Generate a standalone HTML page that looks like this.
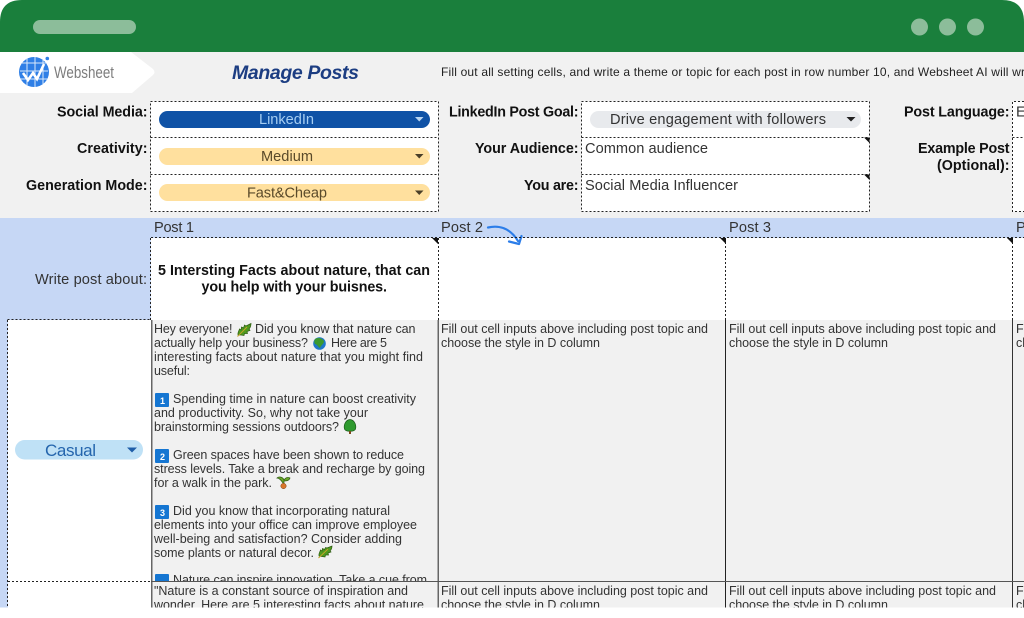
<!DOCTYPE html>
<html><head><meta charset="utf-8"><title>Manage Posts</title>
<style>
html,body{margin:0;padding:0;width:1024px;height:618px;overflow:hidden;background:#fff}
svg{display:block;position:absolute;left:0;top:0}
text{font-family:"Liberation Sans",sans-serif;white-space:pre}
.c{font-size:12.500px;fill:#333}
.l{font-size:14.300px;font-weight:bold;fill:#111;text-anchor:start}
.n{font-size:14.600px;fill:#333}
.d{fill:none;stroke:#222;stroke-width:1;stroke-dasharray:2 2;shape-rendering:crispEdges}
</style></head><body>
<svg width="1024" height="618" viewBox="0 0 1024 618" xmlns="http://www.w3.org/2000/svg">
<defs><clipPath id="page"><rect x="0" y="0" width="1024" height="607.5"/></clipPath>
<clipPath id="r1"><rect x="151" y="320" width="873" height="261"/></clipPath></defs>
<g clip-path="url(#page)">
<!-- backgrounds -->
<rect x="0" y="40" width="1024" height="180" fill="#f1f1f1"/>
<rect x="0" y="218" width="1024" height="400" fill="#c6d7f5"/>
<rect x="8" y="320" width="143" height="300" fill="#fff"/>
<rect x="151" y="238" width="873" height="82" fill="#fff"/>
<rect x="151" y="320" width="873" height="300" fill="#f1f1f1"/>
<!-- header -->
<path d="M0 52V22Q0 0 22 0H1002Q1024 0 1024 22V52Z" fill="#1a7f3c"/>
<rect x="33" y="20" width="103" height="14" rx="7" fill="#8cbd9a"/>
<circle cx="919.5" cy="27" r="8.5" fill="#8cbd9a"/>
<circle cx="947.5" cy="27" r="8.5" fill="#8cbd9a"/>
<circle cx="975.5" cy="27" r="8.5" fill="#8cbd9a"/>
<!-- logo -->
<path d="M0 52H131L153 69Q156 72.500 153 75L132 93H0Z" fill="#fff"/>
<circle cx="34" cy="72" r="15" fill="#2f7fe6"/>
<path d="M22 63H46M20 71H48M20 79H48M27 58V86M35 57V87M43 60V84" stroke="#d8e8fb" stroke-width="1" fill="none"/>
<path d="M23 73L28 80L33 73L37 79L44 64" stroke="#fff" stroke-width="2.600" fill="none"/>
<circle cx="47.300" cy="58.500" r="1.800" fill="#2f7fe6"/>
<text x="54" y="78" font-size="17" fill="#7d7d7d" textLength="60" lengthAdjust="spacingAndGlyphs">Websheet</text>
<!-- title -->
<text x="232" y="79" font-size="19.500" font-weight="bold" font-style="italic" fill="#1c3d82" textLength="127">Manage Posts</text>
<text x="441" y="76" font-size="12" fill="#222" textLength="584">Fill out all setting cells, and write a theme or topic for each post in row number 10, and Websheet AI will wr</text>
<!-- settings labels -->
<text class="l" x="57" y="116.500" textLength="90.500">Social Media:</text>
<text class="l" x="77" y="153" textLength="70.500">Creativity:</text>
<text class="l" x="26" y="190" textLength="121.500">Generation Mode:</text>
<text class="l" x="449" y="116.500" textLength="129.500">LinkedIn Post Goal:</text>
<text class="l" x="475" y="153" textLength="103.500">Your Audience:</text>
<text class="l" x="524" y="190" textLength="54.500">You are:</text>
<text class="l" x="904" y="116.500" textLength="105.500">Post Language:</text>
<text class="l" x="918" y="153" textLength="91.500">Example Post</text>
<text class="l" x="937" y="170" textLength="72.500">(Optional):</text>
<!-- settings cells -->
<rect x="151" y="101.500" width="287" height="110" fill="#fff"/>
<rect x="581.500" y="101.500" width="287.500" height="110" fill="#fff"/>
<rect x="1012.500" y="101.500" width="20" height="110" fill="#fff"/>
<path class="d" d="M150.500 101.500H438.500V211.500H150.500ZM150.500 137.500H438.500M150.500 174.500H438.500"/>
<path class="d" d="M581.500 101.500H869.500V211.500H581.500ZM581.500 137.500H869.500M581.500 174.500H869.500"/>
<path class="d" d="M1024 101.500H1012.500V211.500H1024M1012.500 137.500H1024"/>
<rect x="159" y="111" width="271" height="17" rx="8.500" fill="#0f52a6"/>
<rect x="159" y="148" width="271" height="17" rx="8.500" fill="#ffe09e"/>
<rect x="159" y="184" width="271" height="17" rx="8.500" fill="#ffe09e"/>
<rect x="590" y="111" width="271" height="17" rx="8.500" fill="#e8eaed"/>
<text x="259" y="124" font-size="14.600" fill="#a5cdf2" textLength="55">LinkedIn</text>
<text x="261" y="161" font-size="14.600" fill="#5a4a2a" textLength="52">Medium</text>
<text x="247" y="197.500" font-size="14.600" fill="#5a4a2a" textLength="80">Fast&amp;Cheap</text>
<text x="610" y="124" font-size="14.600" fill="#333" textLength="216">Drive engagement with followers</text>
<path d="M415 117H423.500L419.250 121.500Z" fill="#b9d6f2"/>
<path d="M415 154H423.500L419.250 158.500Z" fill="#4a3f28"/>
<path d="M415 190.500H423.500L419.250 195Z" fill="#4a3f28"/>
<path d="M846.500 117H855.500L851 121.500Z" fill="#222"/>
<text class="n" x="585" y="153" textLength="123">Common audience</text>
<text class="n" x="585" y="190" textLength="153">Social Media Influencer</text>
<text class="n" x="1016" y="116.500">E</text>
<path d="M864 137.500H869.500V143Z" fill="#111"/>
<path d="M864 174.500H869.500V180Z" fill="#111"/>
<!-- post header -->
<text class="n" x="154" y="232" textLength="40">Post 1</text>
<text class="n" x="441" y="232" textLength="42">Post 2</text>
<text class="n" x="729" y="232" textLength="42">Post 3</text>
<text class="n" x="1016" y="232">P</text>
<path d="M488 227.500C499 225 510 228 518 241" fill="none" stroke="#2b7de9" stroke-width="2.200" stroke-linecap="round"/>
<path d="M509 241.500L519 244L521.500 236" fill="none" stroke="#2b7de9" stroke-width="2.200" stroke-linecap="round" stroke-linejoin="round"/>
<path class="d" d="M151 237.500H1024M150.500 238V320M438.500 238V320M725.500 238V320M1012.500 238V320M7.500 319.500H151"/>
<path d="M432 238H438V244Z" fill="#111"/><path d="M720 238H726V244Z" fill="#111"/><path d="M1007 238H1013V244Z" fill="#111"/>
<text x="35" y="284" font-size="14.600" fill="#333" textLength="112">Write post about:</text>
<text x="158" y="275" font-size="14.300" font-weight="bold" fill="#111" textLength="272">5 Intersting Facts about nature, that can</text>
<text x="201.500" y="291.500" font-size="14.300" font-weight="bold" fill="#111" textLength="185.500">you help with your buisnes.</text>
<!-- left style col -->
<path class="d" d="M7.500 320V608M8 581.500H151"/>
<rect x="15" y="440" width="128" height="19.500" rx="9.750" fill="#bfe1f6"/>
<text x="45" y="456" font-size="17" fill="#2465ad" textLength="51">Casual</text>
<path d="M127 447.500H137L132 452.500Z" fill="#1f5ea8"/>
<!-- cells -->
<g clip-path="url(#r1)">
<text class="c" x="154" y="333" textLength="78.500">Hey everyone!</text>
<text class="c" x="255" y="333" textLength="160.500">Did you know that nature can</text>
<text class="c" x="154" y="347" textLength="154">actually help your business?</text>
<text class="c" x="331" y="347" textLength="56">Here are 5</text>
<text class="c" x="154" y="361" textLength="269">interesting facts about nature that you might find</text>
<text class="c" x="154" y="375" textLength="36">useful:</text>
<text class="c" x="173" y="403" textLength="243">Spending time in nature can boost creativity</text>
<text class="c" x="154" y="417" textLength="214">and productivity. So, why not take your</text>
<text class="c" x="154" y="431" textLength="185">brainstorming sessions outdoors?</text>
<text class="c" x="173" y="459" textLength="231">Green spaces have been shown to reduce</text>
<text class="c" x="154" y="473" textLength="271">stress levels. Take a break and recharge by going</text>
<text class="c" x="154" y="487" textLength="118">for a walk in the park.</text>
<text class="c" x="173" y="515" textLength="217">Did you know that incorporating natural</text>
<text class="c" x="154" y="529" textLength="263">elements into your office can improve employee</text>
<text class="c" x="154" y="543" textLength="248">well-being and satisfaction? Consider adding</text>
<text class="c" x="154" y="557" textLength="160">some plants or natural decor.</text>
<text class="c" x="173" y="584" textLength="254">Nature can inspire innovation. Take a cue from</text>
<!-- emoji -->
<path d="M238 335C237.500 332 239 331 239.500 329L241 330L241.500 327L243.500 328L244.500 325L246 326L251 323.500C251 326 250 328 249 329L250 330.500L247 331.500L247.500 333.500L244.500 333.500L244 335.500L241 335Z" fill="#4f9a1e" stroke="#2d5c10" stroke-width=".7"/>
<path d="M237.500 336.500L247 327" stroke="#c9a227" stroke-width=".9"/>
<circle cx="319.500" cy="343.500" r="6.300" fill="#1f77c9"/>
<path d="M315 339C318 337 322 338 324 341C324 344 321 345 320 348C318 347 317 344 315 344C314 342 314 341 315 339Z" fill="#3c9a2e"/>
<rect x="155" y="393" width="14" height="14" rx="1" fill="#1576d2"/>
<rect x="155" y="449" width="14" height="14" rx="1" fill="#1576d2"/>
<rect x="155" y="505" width="14" height="14" rx="1" fill="#1576d2"/>
<rect x="155" y="574" width="14" height="14" rx="1" fill="#1576d2"/>
<text x="160" y="404" font-size="9" font-weight="bold" fill="#fff">1</text>
<text x="160" y="460" font-size="9" font-weight="bold" fill="#fff">2</text>
<text x="160" y="516" font-size="9" font-weight="bold" fill="#fff">3</text>
<path d="M350 419.500C355 420 356.500 426 355.500 429C354.500 432 345.500 432 344.500 429C343.500 426 345 420 350 419.500Z" fill="#2f9a2f" stroke="#1c5c1c" stroke-width=".7"/>
<rect x="349" y="431" width="2" height="3" fill="#7a4a1e"/>
<path d="M283 483C281 480 279 478 277 478C279 476 283 477 284 480C286 477 288 477 290 478C289 481 286 481 284 481L284 485" fill="#6aa72b" stroke="#2f5a10" stroke-width=".7"/>
<circle cx="283.500" cy="486" r="2.700" fill="#d9762b" stroke="#7a3d10" stroke-width=".5"/>
<path d="M319 556C318.500 553 320 552 320.500 550L322 551L322.500 548.500L324.500 549.500L325.500 547.500L327 548L332 546C332 548.500 331 550 330 551L331 552L328 553L328.500 555L325.500 555L325 557L322 556.500Z" fill="#4f9a1e" stroke="#2d5c10" stroke-width=".7"/>
<path d="M318.500 558L328 549" stroke="#c9a227" stroke-width=".9"/>
<text class="c" x="441" y="333" textLength="267">Fill out cell inputs above including post topic and</text>
<text class="c" x="441" y="347" textLength="159">choose the style in D column</text>
<text class="c" x="729" y="333" textLength="267">Fill out cell inputs above including post topic and</text>
<text class="c" x="729" y="347" textLength="159">choose the style in D column</text>
<text class="c" x="1016" y="333">Fill out</text>
<text class="c" x="1016" y="347">choose</text>
</g>
<!-- row 2 -->
<text class="c" x="154" y="595" textLength="254">"Nature is a constant source of inspiration and</text>
<text class="c" x="154" y="609" textLength="270">wonder. Here are 5 interesting facts about nature</text>
<text class="c" x="441" y="595" textLength="267">Fill out cell inputs above including post topic and</text>
<text class="c" x="441" y="609" textLength="159">choose the style in D column</text>
<text class="c" x="729" y="595" textLength="267">Fill out cell inputs above including post topic and</text>
<text class="c" x="729" y="609" textLength="159">choose the style in D column</text>
<text class="c" x="1016" y="595">Fill out</text>
<text class="c" x="1016" y="609">choose</text>
<!-- grid lines -->
<rect x="151" y="320" width="1.500" height="290" fill="#666"/>
<rect x="437.500" y="320" width="1.500" height="290" fill="#666"/>
<rect x="725" y="320" width="1" height="290" fill="#222"/>
<rect x="1012" y="320" width="1" height="290" fill="#333"/>
<rect x="151" y="581" width="873" height="1" fill="#555"/>
</g>
</svg>
</body></html>
